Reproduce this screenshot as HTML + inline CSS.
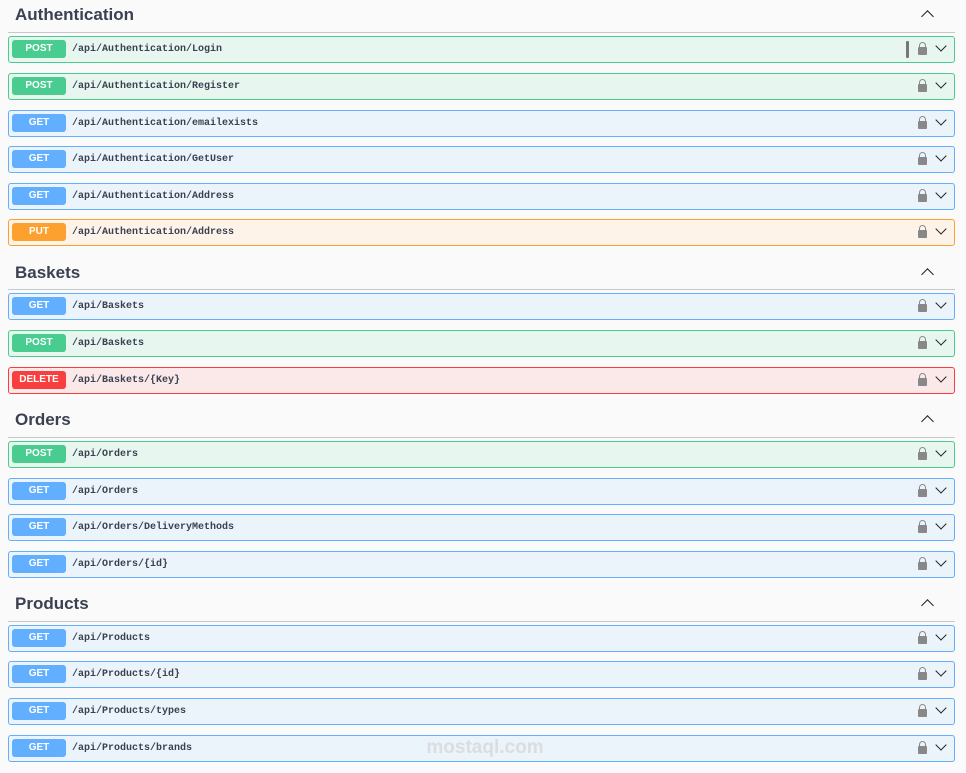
<!DOCTYPE html>
<html><head><meta charset="utf-8"><style>
body{margin:0;width:966px;height:773px;background:#fafafa;position:relative;overflow:hidden;font-family:"Liberation Sans",sans-serif}
.h{position:absolute;left:15px;font-size:17px;font-weight:bold;color:#3b4151;line-height:20px}
.hr{position:absolute;left:8px;width:947px;height:1px;background:#c8c8c8}
.up{position:absolute;left:923px;width:8px;height:8px;border-left:1.6px solid #222;border-top:1.6px solid #222;transform:rotate(45deg)}
.r{position:absolute;left:8px;width:945px;height:25px;border:1px solid;border-radius:3px}
.r .b{position:absolute;left:3px;top:3px;width:54px;height:18px;border-radius:3px;color:#fff;font-size:10px;font-weight:bold;text-align:center;line-height:18px}
.r .p{position:absolute;left:63px;top:0;line-height:25px;font-family:"Liberation Mono",monospace;font-size:10px;color:#3b4151;font-weight:bold}
.g{background:#ebf3fb;border-color:#61affe}.g .b{background:#61affe}
.po{background:#e8f6f0;border-color:#49cc90}.po .b{background:#49cc90}
.pu{background:#fef3e8;border-color:#fca130}.pu .b{background:#fca130}
.d{background:#fbe8e8;border-color:#f93e3e}.d .b{background:#f93e3e}
.lk{position:absolute;left:909px;top:10px;width:9px;height:8px;background:#888;border-radius:1px}
.lk:before{content:"";position:absolute;left:1px;top:-5px;width:5px;height:5px;border:1.5px solid #888;border-bottom:none;border-radius:4px 4px 0 0}
.cv{position:absolute;left:928px;top:5px;width:7px;height:7px;border-right:1.6px solid #222;border-bottom:1.6px solid #222;transform:rotate(45deg)}
.wm{position:absolute;left:425px;color:#d8d8d8;font-weight:bold;text-align:center;width:120px;line-height:22px}
</style></head><body>
<div class="h" style="top:5px">Authentication</div><div class="up" style="top:12px"></div><div class="hr" style="top:32px"></div>
<div class="r po" style="top:36px"><div class="b">POST</div><div class="p">/api/Authentication/Login</div><div style="position:absolute;left:897px;top:4px;width:3px;height:17px;background:#777;border-radius:1px"></div><div class="lk"></div><div class="cv"></div></div>
<div class="r po" style="top:73px"><div class="b">POST</div><div class="p">/api/Authentication/Register</div><div class="lk"></div><div class="cv"></div></div>
<div class="r g" style="top:110px"><div class="b">GET</div><div class="p">/api/Authentication/emailexists</div><div class="lk"></div><div class="cv"></div></div>
<div class="r g" style="top:146px"><div class="b">GET</div><div class="p">/api/Authentication/GetUser</div><div class="lk"></div><div class="cv"></div></div>
<div class="r g" style="top:183px"><div class="b">GET</div><div class="p">/api/Authentication/Address</div><div class="lk"></div><div class="cv"></div></div>
<div class="r pu" style="top:219px"><div class="b">PUT</div><div class="p">/api/Authentication/Address</div><div class="lk"></div><div class="cv"></div></div>

<div class="h" style="top:263px">Baskets</div><div class="up" style="top:270px"></div><div class="hr" style="top:289px"></div>
<div class="r g" style="top:293px"><div class="b">GET</div><div class="p">/api/Baskets</div><div class="lk"></div><div class="cv"></div></div>
<div class="r po" style="top:330px"><div class="b">POST</div><div class="p">/api/Baskets</div><div class="lk"></div><div class="cv"></div></div>
<div class="r d" style="top:367px"><div class="b">DELETE</div><div class="p">/api/Baskets/{Key}</div><div class="lk"></div><div class="cv"></div></div>

<div class="h" style="top:410px">Orders</div><div class="up" style="top:417px"></div><div class="hr" style="top:437px"></div>
<div class="r po" style="top:441px"><div class="b">POST</div><div class="p">/api/Orders</div><div class="lk"></div><div class="cv"></div></div>
<div class="r g" style="top:478px"><div class="b">GET</div><div class="p">/api/Orders</div><div class="lk"></div><div class="cv"></div></div>
<div class="r g" style="top:514px"><div class="b">GET</div><div class="p">/api/Orders/DeliveryMethods</div><div class="lk"></div><div class="cv"></div></div>
<div class="r g" style="top:551px"><div class="b">GET</div><div class="p">/api/Orders/{id}</div><div class="lk"></div><div class="cv"></div></div>

<div class="h" style="top:594px">Products</div><div class="up" style="top:601px"></div><div class="hr" style="top:621px"></div>
<div class="r g" style="top:625px"><div class="b">GET</div><div class="p">/api/Products</div><div class="lk"></div><div class="cv"></div></div>
<div class="r g" style="top:661px"><div class="b">GET</div><div class="p">/api/Products/{id}</div><div class="lk"></div><div class="cv"></div></div>
<div class="r g" style="top:698px"><div class="b">GET</div><div class="p">/api/Products/types</div><div class="lk"></div><div class="cv"></div></div>
<div class="r g" style="top:735px"><div class="b">GET</div><div class="p">/api/Products/brands</div><div class="lk"></div><div class="cv"></div></div>
<div class="wm" style="top:737px;font-size:19px;opacity:.8">mostaql.com</div>
</body></html>
